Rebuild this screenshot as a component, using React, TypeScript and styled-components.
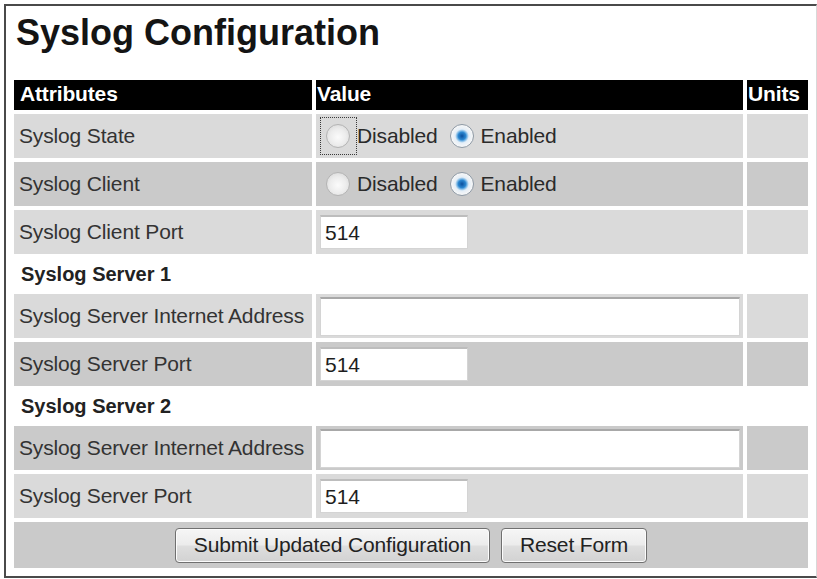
import styled, { createGlobalStyle } from "styled-components";

const GlobalStyle = createGlobalStyle`
  html, body {
    margin: 0;
    padding: 0;
    background: #ffffff;
  }
  body {
    font-family: "Liberation Sans", Arial, sans-serif;
  }
`;

const Frame = styled.div`
  box-sizing: border-box;
  margin: 4px 0 0 4px;
  width: 813px;
  border: 2px solid #4a4a4a;
  border-right: 1px solid #d8d8d8;
  padding: 7px 0 8px 8px;
`;

const Title = styled.h1`
  margin: 0 0 27px 2px;
  font-size: 36px;
  line-height: 40px;
  font-weight: bold;
  color: #141414;
`;

const Table = styled.div`
  display: flex;
  flex-direction: column;
  gap: 4px;
`;

const Row = styled.div<{ $h: number }>`
  display: grid;
  grid-template-columns: 298px 427px 61px;
  column-gap: 4px;
  height: ${({ $h }) => $h}px;
`;

type Tone = "head" | "light" | "dark" | "plain";

const toneBg: Record<Tone, string> = {
  head: "#000000",
  light: "#dadada",
  dark: "#cacaca",
  plain: "#ffffff",
};

const Cell = styled.div<{ $tone: Tone; $pad?: number }>`
  display: flex;
  align-items: center;
  box-sizing: border-box;
  padding-left: ${({ $pad }) => $pad ?? 4}px;
  background: ${({ $tone }) => toneBg[$tone]};
  color: ${({ $tone }) => ($tone === "head" ? "#ffffff" : "#333333")};
  font-size: ${({ $tone }) => ($tone === "head" ? 21 : 21)}px;
  font-weight: ${({ $tone }) => ($tone === "head" ? "bold" : "normal")};
  letter-spacing: -0.15px;
  white-space: nowrap;
  overflow: hidden;
  padding-bottom: ${({ $tone }) => ($tone === "head" ? 3 : 0)}px;
`;

const SectionCell = styled.div`
  grid-column: 1 / -1;
  display: flex;
  align-items: center;
  padding-left: 7px;
  font-size: 20px;
  font-weight: bold;
  color: #222222;
`;

const ButtonBar = styled.div`
  grid-column: 1 / -1;
  display: flex;
  align-items: center;
  justify-content: center;
  gap: 11px;
  background: #cacaca;
  padding-left: 0;
`;

const Button = styled.button`
  box-sizing: border-box;
  height: 35px;
  padding: 0 18px;
  border: 1px solid #707070;
  border-radius: 4px;
  background: linear-gradient(#f6f6f6 0%, #ececec 48%, #dedede 52%, #d2d2d2 100%);
  box-shadow: inset 0 0 0 1px #fcfcfc;
  font-family: "Liberation Sans", Arial, sans-serif;
  font-size: 21px;
  letter-spacing: -0.15px;
  color: #222222;
`;

const TextInput = styled.input<{ $wide?: boolean }>`
  box-sizing: border-box;
  width: ${({ $wide }) => ($wide ? 420 : 148)}px;
  height: ${({ $wide }) => ($wide ? 39 : 34)}px;
  padding: 0 4px;
  border: 1px solid #d4d4d4;
  border-top: 2px solid ${({ $wide }) => ($wide ? "#a8a8a8" : "#bdbdbd")};
  background: #ffffff;
  font-family: "Liberation Sans", Arial, sans-serif;
  font-size: 21px;
  color: #1e1e1e;
  outline: none;
`;

const RadioGroup = styled.div`
  display: flex;
  align-items: center;
  color: #2a2a2a;
  font-size: 21px;
`;

const RadioMark = styled.span<{ $checked?: boolean; $focus?: boolean; $gap: number }>`
  position: relative;
  display: inline-block;
  box-sizing: border-box;
  width: 24px;
  height: 24px;
  margin-left: ${({ $gap }) => $gap}px;
  margin-right: 7px;
  border-radius: 50%;
  border: 1px solid ${({ $checked }) => ($checked ? "#8e9aa6" : "#b4b4b4")};
  background: ${({ $checked }) =>
    $checked
      ? "radial-gradient(circle at 50% 50%, #0b4f9c 0, #2a86d0 24%, #7db9e6 33%, #e4eef7 44%, #f7f7f7 70%, #e6e6e6 100%)"
      : "radial-gradient(circle at 50% 55%, #fbfbfb 0, #ececec 50%, #d2d2d2 100%)"};

  &::before {
    content: "";
    display: ${({ $focus }) => ($focus ? "block" : "none")};
    position: absolute;
    inset: -8px -8px -8px -7px;
    border: 1px dotted #3a3a3a;
  }
`;

function Radios({ focus }: { focus?: boolean }) {
  return (
    <RadioGroup>
      <RadioMark $gap={6} $focus={focus} />
      <span>Disabled</span>
      <RadioMark $gap={12} $checked />
      <span>Enabled</span>
    </RadioGroup>
  );
}

function DataRow({
  label,
  tone,
  children,
}: {
  label: string;
  tone: Tone;
  children?: React.ReactNode;
}) {
  return (
    <Row $h={44}>
      <Cell $tone={tone} $pad={5}>
        {label}
      </Cell>
      <Cell $tone={tone}>{children}</Cell>
      <Cell $tone={tone} />
    </Row>
  );
}

export default function App() {
  return (
    <>
      <GlobalStyle />
      <Frame>
        <Title>Syslog Configuration</Title>
        <Table>
          <Row $h={30}>
            <Cell $tone="head" $pad={6}>
              Attributes
            </Cell>
            <Cell $tone="head" $pad={1}>
              Value
            </Cell>
            <Cell $tone="head" $pad={1}>
              Units
            </Cell>
          </Row>
          <DataRow label="Syslog State" tone="light">
            <Radios focus />
          </DataRow>
          <DataRow label="Syslog Client" tone="dark">
            <Radios />
          </DataRow>
          <DataRow label="Syslog Client Port" tone="light">
            <TextInput defaultValue="514" />
          </DataRow>
          <Row $h={32}>
            <SectionCell>Syslog Server 1</SectionCell>
          </Row>
          <DataRow label="Syslog Server Internet Address" tone="light">
            <TextInput $wide defaultValue="" />
          </DataRow>
          <DataRow label="Syslog Server Port" tone="dark">
            <TextInput defaultValue="514" />
          </DataRow>
          <Row $h={32}>
            <SectionCell>Syslog Server 2</SectionCell>
          </Row>
          <DataRow label="Syslog Server Internet Address" tone="dark">
            <TextInput $wide defaultValue="" />
          </DataRow>
          <DataRow label="Syslog Server Port" tone="light">
            <TextInput defaultValue="514" />
          </DataRow>
          <Row $h={46}>
            <ButtonBar>
              <Button type="button">Submit Updated Configuration</Button>
              <Button type="button">Reset Form</Button>
            </ButtonBar>
          </Row>
        </Table>
      </Frame>
    </>
  );
}
